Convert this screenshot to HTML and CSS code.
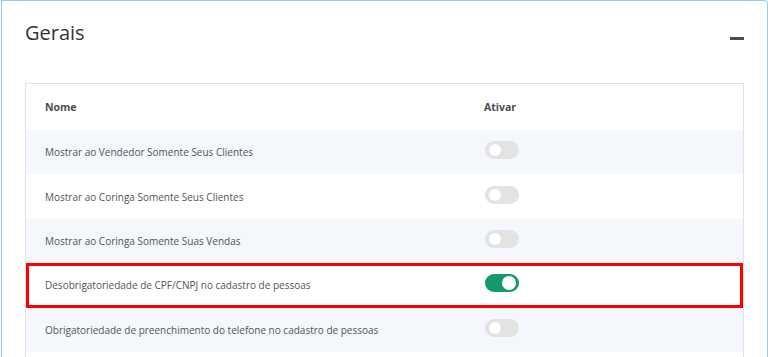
FILE: index.html
```html
<!DOCTYPE html>
<html>
<head>
    <title>Configurações - Gerais</title>
    <link rel="stylesheet" href="styles.css">
</head>
<body>
    <div class="card">
        <div class="card-header">
            <h2 class="card-title">Gerais</h2>
            <span class="collapse-btn"></span>
        </div>

        <div class="settings">
            <div class="row head">
                <div class="cell">Nome</div>
                <div class="cell">Ativar</div>
            </div>
            <div class="row">
                <div class="cell">Mostrar ao Vendedor Somente Seus Clientes</div>
                <div class="cell"><span class="toggle"></span></div>
            </div>
            <div class="row">
                <div class="cell">Mostrar ao Coringa Somente Seus Clientes</div>
                <div class="cell"><span class="toggle"></span></div>
            </div>
            <div class="row">
                <div class="cell">Mostrar ao Coringa Somente Suas Vendas</div>
                <div class="cell"><span class="toggle"></span></div>
            </div>
            <div class="row highlight">
                <div class="cell">Desobrigatoriedade de CPF/CNPJ no cadastro de pessoas</div>
                <div class="cell"><span class="toggle on"></span></div>
            </div>
            <div class="row">
                <div class="cell">Obrigatoriedade de preenchimento do telefone no cadastro de pessoas</div>
                <div class="cell"><span class="toggle"></span></div>
            </div>
        </div>
    </div>
</body>
</html>
```

FILE: styles.css
```css
body {
    font-family: "Open Sans", sans-serif;
    background-color: #fff;
    margin: 0;
    padding: 0;
}

.card {
    box-sizing: border-box;
    display: flex;
    flex-direction: column;
    margin-left: 1px;
    height: 100vh;
    overflow: hidden;
    border: 1px solid #8ecfec;
    border-bottom: 0;
    border-top-right-radius: 4px;
    padding: 18px 23px 0 23px;
}

.card-header {
    display: flex;
    justify-content: space-between;
    align-items: flex-start;
}

.card-title {
    margin: 0;
    font-size: 20px;
    font-weight: 400;
    line-height: 27px;
    color: #333;
}

.collapse-btn {
    display: block;
    width: 14px;
    height: 3px;
    margin-top: 18px;
    background-color: #4d4d4d;
}

.settings {
    flex: 1;
    overflow: hidden;
    margin-top: 37px;
    border: 1px solid #dfe4ea;
    border-bottom: 0;
}

.row {
    display: grid;
    grid-template-columns: 439px 1fr;
    align-items: center;
    height: 44.4px;
    font-size: 10px;
    color: #555;
}

.row:nth-child(even) {
    background-color: #f4f7fb;
}

.row.head {
    height: 46px;
    font-size: 10.5px;
    font-weight: bold;
    color: #4d4d4d;
}

.cell {
    padding: 0 19px;
}

.highlight {
    outline: 3px solid #ff0000;
    outline-offset: -3px;
}

.toggle {
    display: block;
    position: relative;
    margin: 0 0 4px 1px;
    width: 34px;
    height: 18px;
    border-radius: 9px;
    background-color: #e3e3e3;
}

.toggle::after {
    content: "";
    position: absolute;
    top: 3px;
    left: 4px;
    width: 12px;
    height: 12px;
    border-radius: 50%;
    background-color: #fff;
}

.toggle.on {
    background-color: #15996b;
}

.toggle.on::after {
    left: auto;
    right: 3px;
    top: 2px;
    width: 14px;
    height: 14px;
}
```
